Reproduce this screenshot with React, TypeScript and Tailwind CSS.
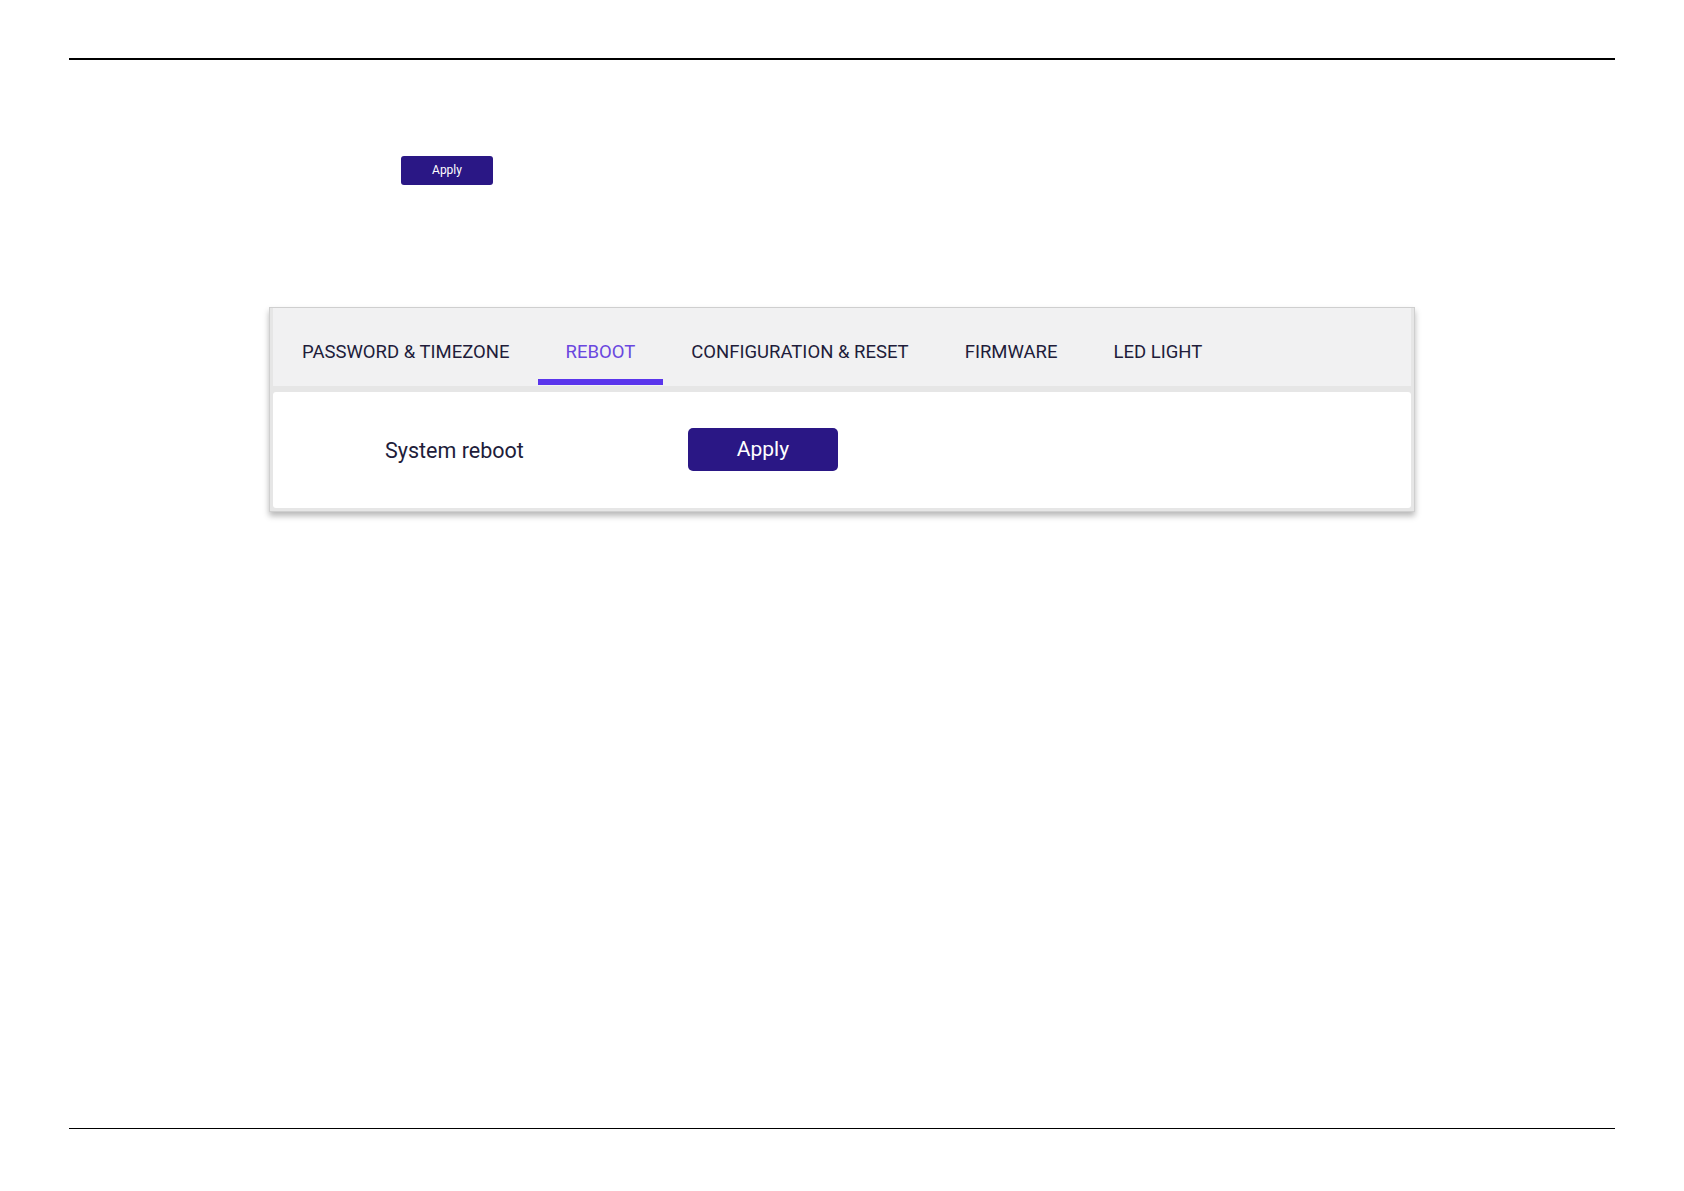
import {useState} from 'react';

const TABS = ['PASSWORD & TIMEZONE', 'REBOOT', 'CONFIGURATION & RESET', 'FIRMWARE', 'LED LIGHT'];

export default function App() {
  const [active, setActive] = useState(1);

  return (
    <div className="flex h-[1191px] flex-col bg-white px-[69px] font-['Roboto',sans-serif]">
      {/* header rule */}
      <div className="mt-[58px] h-[1.5px] bg-black" />

      {/* small apply */}
      <div className="mt-[96px] pl-[332px]">
        <button
          type="button"
          className="h-[29px] w-[92px] rounded-[3px] bg-[#2a1785] text-[12px] text-white"
        >
          Apply
        </button>
      </div>

      {/* settings panel */}
      <div className="ml-[200px] mt-[122px] w-[1146px] border border-[#cfcfcf] bg-[#e6e6e6] p-[3px] pt-0 shadow-[0_4px_6px_rgba(0,0,0,0.28)]">
        <div className="flex h-[78px] items-stretch bg-[#f1f1f2] pl-[1px]">
          {TABS.map((tab, i) => {
            const isActive = i === active;
            return (
              <button
                key={tab}
                type="button"
                onClick={() => setActive(i)}
                className={`relative flex items-center px-[28px] pt-[12px] text-[18.5px] ${
                  isActive ? 'text-[#6a47df]' : 'text-[#211c3a]'
                }`}
              >
                {tab}
                {isActive && (
                  <span className="absolute bottom-[1px] left-0 right-0 h-[6px] bg-[#5a35ec]" />
                )}
              </button>
            );
          })}
        </div>
        <div className="mt-[6px] flex h-[116px] items-center rounded-[3px] bg-white">
          <span className="ml-[112px] w-[303px] pt-[4px] text-[21.5px] text-[#211c3a]">System reboot</span>
          <button
            type="button"
            className="h-[43px] w-[150px] rounded-[5px] bg-[#2a1785] text-[21px] text-white"
          >
            Apply
          </button>
        </div>
      </div>

      {/* footer rule */}
      <div className="mb-[62px] mt-auto h-[1.5px] bg-black" />
    </div>
  );
}
